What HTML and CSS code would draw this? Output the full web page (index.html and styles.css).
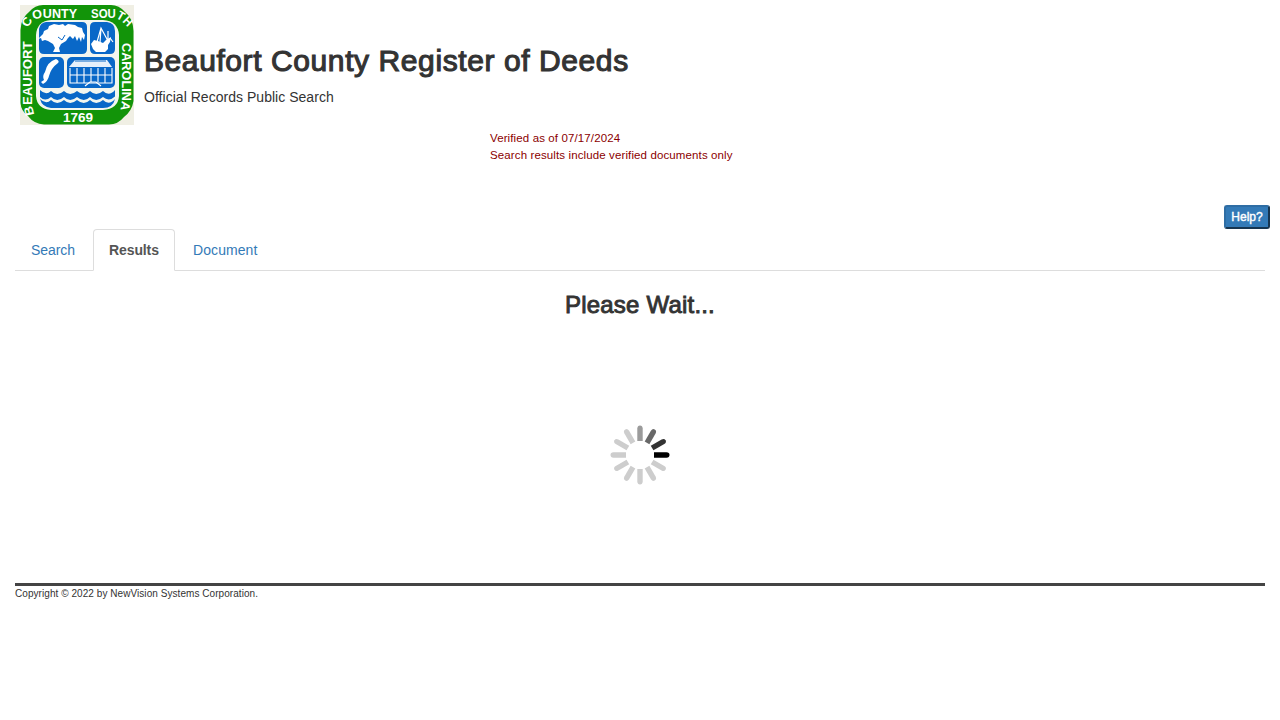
FILE: index.html
```html
<!DOCTYPE html>
<html lang="en">
<head>
<meta charset="utf-8">
<title>Beaufort County Register of Deeds</title>
<link rel="stylesheet" href="styles.css">
</head>
<body>
<header class="header">
  <svg class="seal" viewBox="20 5 114 120" role="img" aria-label="Beaufort County seal">
    <defs>
      <path id="top-arc" d="M29 28Q31 18.500 41 18H114Q120 18 130 30"/>
      <path id="left-arc" d="M35 114Q32 110 32.500 101V38"/>
      <path id="right-arc" d="M122 43V98Q122 105 119 115"/>
    </defs>
    <path fill="#f0efe4" d="M20 5h114v120H20z"/>
    <path class="green" d="M43 5H111Q119 5 125 12Q133 18 133.500 31V101Q132 111 124 117Q118 124.500 109 124.500H44Q34 124 28 116Q21 111 20.500 103V30Q21 18 29 12Q35 5 43 5z"/>
    <path fill="#f3f6ef" d="M51 20H103Q118 21 119 35V96Q118 109 103 110H51Q37 109 36 96V35Q37 21 51 20z"/>
    <g class="blue">
      <path d="M46 22H82Q87 22 87 27V49Q87 54 82 54H44Q39 54 39 49V29Q40 23 46 22z"/>
      <path d="M95 22H107Q115 23 115 31V49Q115 54 110 54H95Q90 54 90 49V27Q90 22 95 22z"/>
      <rect x="39" y="57" width="25" height="31" rx="5"/>
      <rect x="67" y="57" width="48" height="31" rx="5"/>
      <path d="M40 90Q46 96 51 91Q57 97 64 91Q70 97 77 91Q84 97 90 91Q96 97 103 91Q109 97 115 90V96.500Q109 102 103 97Q96 103 90 97Q84 103 77 97Q70 103 64 97Q57 103 51 97Q45 102 40 97z"/>
      <path d="M40 99Q46 105 51 100Q57 106 64 100Q70 106 77 100Q84 106 90 100Q96 106 103 100Q109 106 115 99Q113 108 103 108H51Q42 107 40 99z"/>
    </g>
    <g fill="#fff">
      <path d="M41 36l2-2 1-3 4-2 1-3 5-2 5 1 4-1 2 2 3-2 7 1 3 2 4 1 1 4 2 3-1 5-2-3-1 5-2-5-2 4-2-5-2 3-3-3-2 2-2 3-5 3-2 4 1 4h-7l2-4-2-4-5-3-3-1-3 1-1-3-3 1z"/>
      <path d="M91 44l3-4 4 1 5 2 3-3 5-3-1 5-2 3v4l-3 3H96l-3-3z"/>
      <path d="M56 59Q60 61 58 63Q51 68 49 76Q48 81 43 84L41 82L44 80Q42 76 45 72Q47 62 56 59z"/>
      <path opacity=".9" d="M75 60H107L112 67H69z"/>
    </g>
    <path class="building" d="M70 68V83H85M70 75H112M70 83H112V68M77 68V83M84 68V83M91 68V82M98 68V82M105 68V83"/>
    <path fill="none" stroke="#fff" stroke-width="1.200" d="M97 42L101 28L108 41M101 28L100 43M108 41V31M110 38l3 4M85 86l5-4h6l5 4"/>
    <path fill="none" stroke="#0968c8" stroke-width="1" d="M58 37l4 3 3-5M75 61h31"/>
    <g class="lettering">
      <text><textPath href="#top-arc" textLength="53" lengthAdjust="spacingAndGlyphs">COUNTY</textPath></text>
      <text><textPath href="#top-arc" startOffset="67" textLength="40" lengthAdjust="spacingAndGlyphs">SOUTH</textPath></text>
      <text><textPath href="#left-arc" textLength="73" lengthAdjust="spacingAndGlyphs">BEAUFORT</textPath></text>
      <text><textPath href="#right-arc" textLength="67" lengthAdjust="spacingAndGlyphs">CAROLINA</textPath></text>
      <text x="63" y="122" textLength="30" lengthAdjust="spacingAndGlyphs">1769</text>
    </g>
  </svg>
  <div class="titles">
    <h1 class="title">Beaufort County Register of Deeds</h1>
    <p class="subtitle">Official Records Public Search</p>
  </div>
</header>
<div class="verified">Verified as of 07/17/2024<br><span class="verified-note">Search results include verified documents only</span></div>
<div class="actions"><button class="help">Help?</button></div>
<nav class="tabs">
  <a class="tab tab-search">Search</a>
  <a class="tab tab-results">Results</a>
  <a class="tab tab-document">Document</a>
</nav>
<main class="content">
  <h2 class="wait">Please Wait...</h2>
  <svg class="spinner" viewBox="-30 -30 60 60" aria-label="Loading">
    <defs><path id="spoke" d="M14-2.700H26.500Q29.500-2.500 29.500 0Q29.500 2.500 26.500 2.700H14z"/></defs>
    <g fill="#cdcdcd">
      <use href="#spoke" transform="rotate(30)"/><use href="#spoke" transform="rotate(60)"/>
      <use href="#spoke" transform="rotate(90)"/><use href="#spoke" transform="rotate(120)"/>
      <use href="#spoke" transform="rotate(150)"/><use href="#spoke" transform="rotate(180)"/>
      <use href="#spoke" transform="rotate(210)"/><use href="#spoke" transform="rotate(240)"/>
    </g>
    <use href="#spoke" transform="rotate(270)" fill="#9b9b9b"/>
    <use href="#spoke" transform="rotate(300)" fill="#686868"/>
    <use href="#spoke" transform="rotate(330)" fill="#333"/>
    <use href="#spoke" fill="#000"/>
  </svg>
</main>
<footer class="footer">Copyright © 2022 by NewVision Systems Corporation.</footer>
</body>
</html>
```

FILE: styles.css
```css
* { box-sizing: border-box; }
body { margin: 0; padding: 5px 15px 0; background: #fff; color: #333; font: 14px/20px "Liberation Sans", Arial, sans-serif; }
.header { display: flex; height: 120px; padding-left: 5px; gap: 10px; }
.seal { width: 114px; height: 120px; flex: none; overflow: visible; }
.green { fill: #129409; }
.blue { fill: #0968c8; }
.building { fill: none; stroke: #fff; stroke-width: 1.1; }
.lettering { fill: #fff; font: bold 12.5px "Liberation Sans", Arial, sans-serif; }
.titles { padding-top: 39px; white-space: nowrap; }
.title { margin: 0; font-size: 30px; line-height: 33px; font-weight: 400; letter-spacing: .59px; -webkit-text-stroke: 1.1px #333; }
.subtitle { margin: 10px 0 0; letter-spacing: .03px; }
.verified { margin: 5px 0 0 475px; height: 75px; color: #8b0000; font-size: 11.5px; line-height: 17px; letter-spacing: .12px; }
.actions { display: flex; justify-content: flex-end; margin-right: -5px; height: 24px; }
.help { width: 46px; height: 24px; padding: 0; border: 2px outset #2e6da4; border-radius: 3px; background: #337ab7; color: #fff; font: 12px/18px "Liberation Sans", Arial, sans-serif; -webkit-text-stroke: .4px #fff; }
.tabs { display: flex; height: 42px; gap: 2px; border-bottom: 1px solid #ddd; }
.tab { height: 42px; padding: 10px 15px; border: 1px solid transparent; border-radius: 4px 4px 0 0; color: #337ab7; white-space: nowrap; }
.tab-search { width: 76px; letter-spacing: -.08px; }
.tab-results { width: 82px; border-color: #ddd #ddd #fff; background: #fff; color: #555; font-weight: 700; letter-spacing: -.1px; }
.tab-document { width: 97px; letter-spacing: .08px; }
.content { display: flex; flex-direction: column; align-items: center; height: 312px; padding-top: 20px; }
.wait { margin: 0; font-size: 24px; line-height: 28px; font-weight: 400; letter-spacing: .2px; -webkit-text-stroke: .9px #333; }
.spinner { width: 60px; height: 60px; margin-top: 106px; }
.footer { border-top: 3px solid #444; font-size: 10px; line-height: 15px; letter-spacing: .06px; }
```
